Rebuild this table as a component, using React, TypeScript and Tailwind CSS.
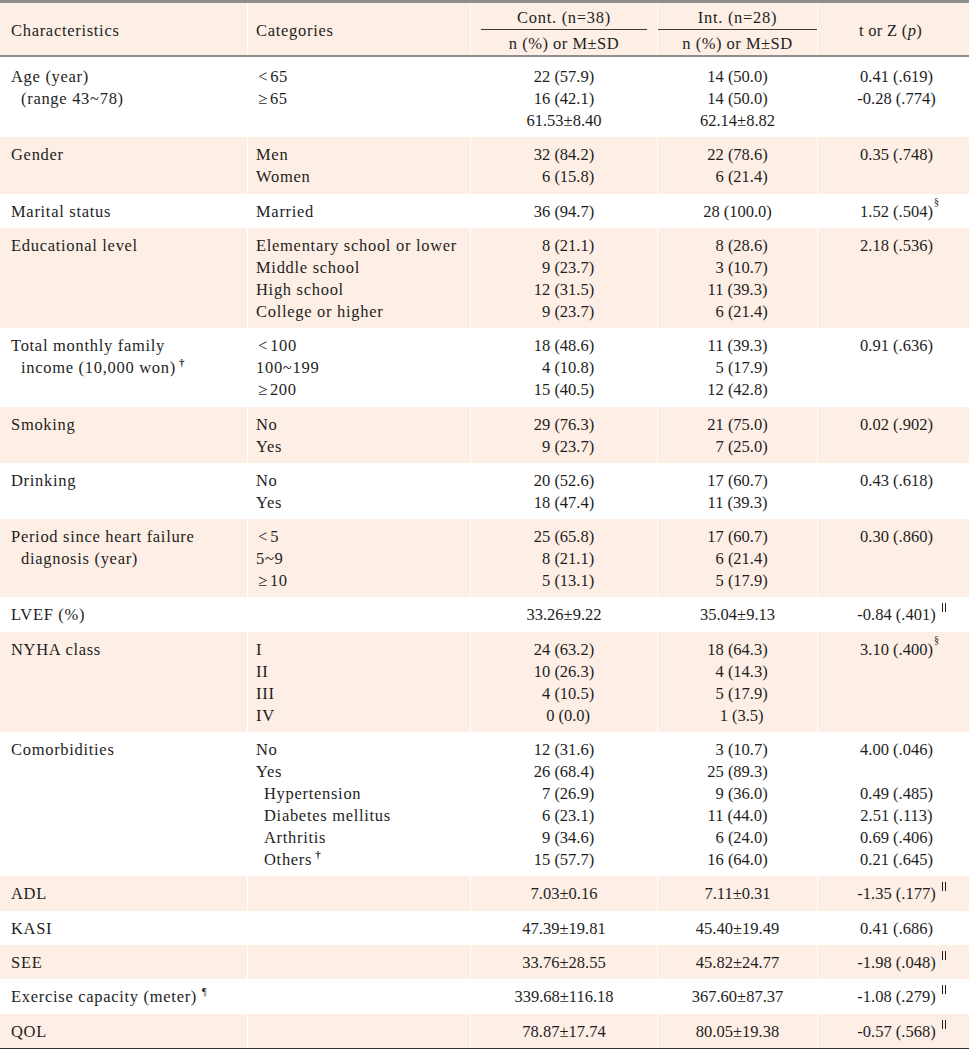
import React from "react";

type PVal = { v: string; sup?: string; gap?: boolean };
type Line1 = { t: React.ReactNode; indent?: boolean };
type Row = {
  c1: Line1[];
  c2: Line1[];
  c3: string[];
  c4: string[];
  c5: (PVal | null)[];
  shade: boolean;
};

const Dagger = ({ ch }: { ch: string }) => (
  <span className="relative top-[-7px] ml-[3px] text-[11px] font-bold leading-none">{ch}</span>
);

const rows: Row[] = [
  {
    c1: [{ t: "Age (year)" }, { t: "(range 43~78)", indent: true }],
    c2: [{ t: "\u200a<\u200a65" }, { t: "\u200a≥\u200a65" }],
    c3: ["22 (57.9)", "16 (42.1)", "61.53±8.40"],
    c4: ["14 (50.0)", "14 (50.0)", "62.14±8.82"],
    c5: [{ v: "0.41 (.619)" }, { v: "-0.28 (.774)" }],
    shade: false,
  },
  {
    c1: [{ t: "Gender" }],
    c2: [{ t: "Men" }, { t: "Women" }],
    c3: ["32 (84.2)", "_6 (15.8)"],
    c4: ["22 (78.6)", "_6 (21.4)"],
    c5: [{ v: "0.35 (.748)" }],
    shade: true,
  },
  {
    c1: [{ t: "Marital status" }],
    c2: [{ t: "Married" }],
    c3: ["36 (94.7)"],
    c4: ["28 (100.0)"],
    c5: [{ v: "1.52 (.504)", sup: "§" }],
    shade: false,
  },
  {
    c1: [{ t: "Educational level" }],
    c2: [
      { t: "Elementary school or lower" },
      { t: "Middle school" },
      { t: "High school" },
      { t: "College or higher" },
    ],
    c3: ["_8 (21.1)", "_9 (23.7)", "12 (31.5)", "_9 (23.7)"],
    c4: ["_8 (28.6)", "_3 (10.7)", "11 (39.3)", "_6 (21.4)"],
    c5: [{ v: "2.18 (.536)" }],
    shade: true,
  },
  {
    c1: [
      { t: "Total monthly family" },
      {
        t: (
          <>
            income (10,000 won)
            <Dagger ch="†" />
          </>
        ),
        indent: true,
      },
    ],
    c2: [{ t: "\u200a<\u200a100" }, { t: "100~199" }, { t: "\u200a≥\u200a200" }],
    c3: ["18 (48.6)", "_4 (10.8)", "15 (40.5)"],
    c4: ["11 (39.3)", "_5 (17.9)", "12 (42.8)"],
    c5: [{ v: "0.91 (.636)" }],
    shade: false,
  },
  {
    c1: [{ t: "Smoking" }],
    c2: [{ t: "No" }, { t: "Yes" }],
    c3: ["29 (76.3)", "_9 (23.7)"],
    c4: ["21 (75.0)", "_7 (25.0)"],
    c5: [{ v: "0.02 (.902)" }],
    shade: true,
  },
  {
    c1: [{ t: "Drinking" }],
    c2: [{ t: "No" }, { t: "Yes" }],
    c3: ["20 (52.6)", "18 (47.4)"],
    c4: ["17 (60.7)", "11 (39.3)"],
    c5: [{ v: "0.43 (.618)" }],
    shade: false,
  },
  {
    c1: [{ t: "Period since heart failure" }, { t: "diagnosis (year)", indent: true }],
    c2: [{ t: "\u200a<\u200a5" }, { t: "5~9" }, { t: "\u200a≥\u200a10" }],
    c3: ["25 (65.8)", "_8 (21.1)", "_5 (13.1)"],
    c4: ["17 (60.7)", "_6 (21.4)", "_5 (17.9)"],
    c5: [{ v: "0.30 (.860)" }],
    shade: true,
  },
  {
    c1: [{ t: "LVEF (%)" }],
    c2: [],
    c3: ["33.26±9.22"],
    c4: ["35.04±9.13"],
    c5: [{ v: "-0.84 (.401)", sup: "‖", gap: true }],
    shade: false,
  },
  {
    c1: [{ t: "NYHA class" }],
    c2: [{ t: "I" }, { t: "II" }, { t: "III" }, { t: "IV" }],
    c3: ["24 (63.2)", "10 (26.3)", "_4 (10.5)", "_0 (0.0)"],
    c4: ["18 (64.3)", "_4 (14.3)", "_5 (17.9)", "_1 (3.5)"],
    c5: [{ v: "3.10 (.400)", sup: "§" }],
    shade: true,
  },
  {
    c1: [{ t: "Comorbidities" }],
    c2: [
      { t: "No" },
      { t: "Yes" },
      { t: "Hypertension", indent: true },
      { t: "Diabetes mellitus", indent: true },
      { t: "Arthritis", indent: true },
      {
        t: (
          <>
            Others
            <Dagger ch="†" />
          </>
        ),
        indent: true,
      },
    ],
    c3: ["12 (31.6)", "26 (68.4)", "_7 (26.9)", "_6 (23.1)", "_9 (34.6)", "15 (57.7)"],
    c4: ["_3 (10.7)", "25 (89.3)", "_9 (36.0)", "11 (44.0)", "_6 (24.0)", "16 (64.0)"],
    c5: [
      { v: "4.00 (.046)" },
      null,
      { v: "0.49 (.485)" },
      { v: "2.51 (.113)" },
      { v: "0.69 (.406)" },
      { v: "0.21 (.645)" },
    ],
    shade: false,
  },
  {
    c1: [{ t: "ADL" }],
    c2: [],
    c3: ["7.03±0.16"],
    c4: ["7.11±0.31"],
    c5: [{ v: "-1.35 (.177)", sup: "‖", gap: true }],
    shade: true,
  },
  {
    c1: [{ t: "KASI" }],
    c2: [],
    c3: ["47.39±19.81"],
    c4: ["45.40±19.49"],
    c5: [{ v: "0.41 (.686)" }],
    shade: false,
  },
  {
    c1: [{ t: "SEE" }],
    c2: [],
    c3: ["33.76±28.55"],
    c4: ["45.82±24.77"],
    c5: [{ v: "-1.98 (.048)", sup: "‖", gap: true }],
    shade: true,
  },
  {
    c1: [
      {
        t: (
          <>
            Exercise capacity (meter)
            <span className="relative top-[-7px] ml-[5px] text-[10px] leading-none">¶</span>
          </>
        ),
      },
    ],
    c2: [],
    c3: ["339.68±116.18"],
    c4: ["367.60±87.37"],
    c5: [{ v: "-1.08 (.279)", sup: "‖", gap: true }],
    shade: false,
  },
  {
    c1: [{ t: "QOL" }],
    c2: [],
    c3: ["78.87±17.74"],
    c4: ["80.05±19.38"],
    c5: [{ v: "-0.57 (.568)", sup: "‖", gap: true }],
    shade: true,
  },
];

function Num({ s }: { s: string }) {
  if (s.startsWith("_")) {
    return (
      <div>
        <span className="invisible">0</span>
        {s.slice(1)}
      </div>
    );
  }
  return <div>{s}</div>;
}

function PCell({ p }: { p: PVal | null }) {
  if (!p) return <div>&nbsp;</div>;
  return (
    <div>
      <span className="relative">
        {p.v}
        {p.sup === "‖" && (
          <span className="absolute left-full top-[-2px] ml-[6px] flex gap-[2px]">
            <span className="block h-[9px] w-px bg-[#1e1e1e]" />
            <span className="block h-[9px] w-px bg-[#1e1e1e]" />
          </span>
        )}
        {p.sup === "§" && (
          <span className="absolute left-full top-[-5px] ml-[1px] text-[10px] leading-none">§</span>
        )}
      </span>
    </div>
  );
}

const cols = "grid grid-cols-[247px_223px_187px_160px_152px]";

export default function App() {
  return (
    <div className="w-[969px] bg-white font-['Liberation_Serif',serif] text-[16.5px] leading-[22px] text-[#1e1e1e]">
      {/* Header */}
      <div className={cols + " border-t-[3px] border-b-2 border-t-[#8e8e8e] border-b-[#8e8e8e] bg-[#fdefe5]"}>
        <div className="flex items-center pt-[4px] pl-[11px] tracking-[0.7px]">Characteristics</div>
        <div className="flex items-center border-l border-white pt-[4px] pl-2 tracking-[0.7px]">Categories</div>
        <div className="flex flex-col border-l border-white">
          <div className="flex h-[26px] items-center justify-center pt-[3px] tracking-[0.7px]">Cont. (n=38)</div>
          <div className="mx-[10px] h-px bg-[#3a3a3a]" />
          <div className="flex h-[25px] items-center justify-center pt-[2px] tracking-[0.5px]">n (%) or M±SD</div>
        </div>
        <div className="flex flex-col border-l border-white">
          <div className="flex h-[26px] items-center justify-center pt-[3px] tracking-[0.7px]">Int. (n=28)</div>
          <div className="h-px bg-[#3a3a3a]" />
          <div className="flex h-[25px] items-center justify-center pt-[2px] tracking-[0.5px]">n (%) or M±SD</div>
        </div>
        <div className="flex items-center justify-center border-l border-white pt-[4px] pr-[6px] tracking-[0.3px]">
          <span>
            t or Z (<span className="italic">p</span>)
          </span>
        </div>
      </div>

      {/* Body */}
      <div className="border-b-2 border-[#333333]">
        {rows.map((r, i) => {
          const pad = i === 0 ? "pt-[9px] pb-[5.4px]" : "pt-[7px] pb-[5.3px]";
          return (
            <div key={i} className={cols + " " + (r.shade ? "bg-[#fdefe5]" : "bg-white")}>
              <div className={pad + " pl-[11px] tracking-[0.7px]"}>
                {r.c1.map((l, j) => (
                  <div key={j} className={l.indent ? "pl-[10px]" : ""}>
                    {l.t}
                  </div>
                ))}
              </div>
              <div className={pad + " border-l border-white pl-2 tracking-[0.7px]"}>
                {r.c2.map((l, j) => (
                  <div key={j} className={l.indent ? "pl-[8px]" : ""}>
                    {l.t}
                  </div>
                ))}
              </div>
              <div className={pad + " border-l border-white text-center"}>
                {r.c3.map((s, j) => (
                  <Num key={j} s={s} />
                ))}
              </div>
              <div className={pad + " border-l border-white text-center"}>
                {r.c4.map((s, j) => (
                  <Num key={j} s={s} />
                ))}
              </div>
              <div className={pad + " border-l border-white pl-[6px] text-center"}>
                {r.c5.map((p, j) => (
                  <PCell key={j} p={p} />
                ))}
              </div>
            </div>
          );
        })}
      </div>
    </div>
  );
}
